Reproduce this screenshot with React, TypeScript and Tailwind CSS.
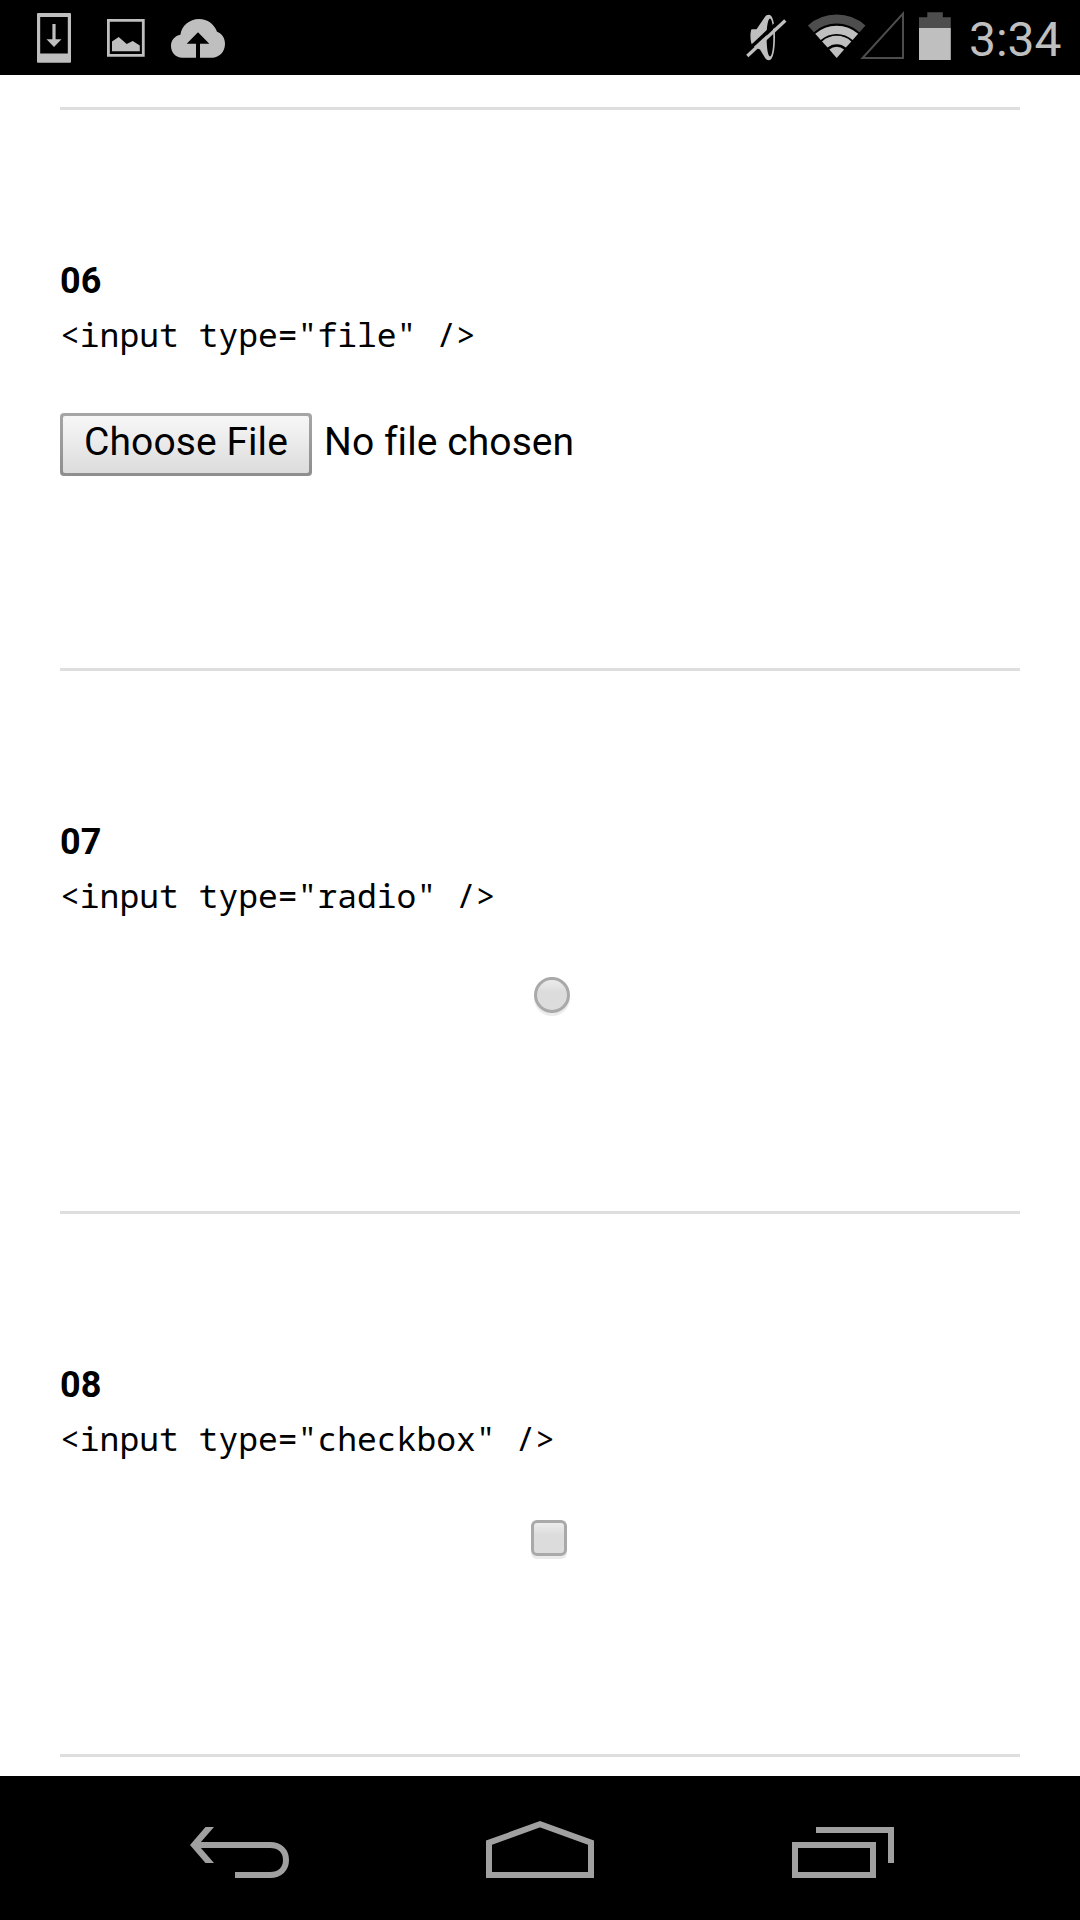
import type { ReactNode } from "react";

function StatusBar() {
  return (
    <header className="flex h-[75px] items-start bg-black pl-[36px] text-[#bfbfbf]">
      <svg width="36" height="75" viewBox="36 0 36 75" fill="currentColor">
        <path fillRule="evenodd" d="M38 13H70Q71 13 71 14V61.7Q71 62.7 70 62.7H38Q37 62.7 37 61.7V14Q37 13 38 13ZM40.2 17V53.5H67.8V17Z" />
        <path d="M52.4 24H55.6V39.3H61.5L54 47L46.5 39.3H52.4Z" />
      </svg>
      <svg className="ml-[34px]" width="40" height="75" viewBox="106 0 40 75" fill="currentColor">
        <path fillRule="evenodd" d="M107 19H144.7V56.7H107ZM109.8 21.8V53.9H141.9V21.8Z" />
        <path d="M112 41.5L118.7 37L126.7 44L132.7 41L139.8 45.5V51.3H112Z" />
      </svg>
      <svg className="ml-[24px]" width="56" height="75" viewBox="170 0 56 75" fill="currentColor">
        <path d="M182.5 57.7C175.5 57.7 171 52.5 171 46C171 40 175 35.8 180.4 34.8C181.5 25.8 189.5 19 199 19C207.5 19 214.5 24.3 217 31.8C221.8 33.4 225 38 225 43.8C225 51.8 219.5 57.7 212 57.7H200V43.7H209.3L198 32.3L186.7 43.7H196V57.7Z" />
      </svg>
      <svg className="ml-[519px]" width="42" height="75" viewBox="745 0 42 75" fill="currentColor">
        <path fillRule="evenodd" d="M751.5 29.2H756.5L764.5 17.5C765.8 15.5 767 14.8 769 14.8C773 14.8 775 25 775 37.5C775 50 773 60.2 769 60.2C767 60.2 765.8 59.2 764.5 57L760 49.5L753 46.5C750 43 749.8 33 751.5 29.2ZM770 18.5C768 18.5 766.6 27 766.6 37.5C766.6 48 768 56.5 770 56.5C772 56.5 773.3 48 773.3 37.5C773.3 27 772 18.5 770 18.5Z" />
        <path d="M745 52.8L783.5 17" stroke="#000" strokeWidth="3.5" />
        <path d="M747.3 56L785.3 20.5" stroke="currentColor" strokeWidth="3.3" />
      </svg>
      <svg className="ml-[20px]" width="98" height="75" viewBox="807 0 98 75" fill="none">
        <g strokeWidth="8.3" stroke="#bfbfbf">
          <path d="M810.9 28.8A39 39 0 0 1 862.5 28.8" stroke="#4d4d4d" strokeWidth="9" />
          <path d="M818 36.9A28.2 28.2 0 0 1 855.4 36.9" />
          <path d="M824.8 44.5A18 18 0 0 1 848.6 44.5" />
          <path d="M836.7 58L829.3 49.6A11.2 11.2 0 0 1 844.1 49.6Z" fill="#bfbfbf" stroke="none" />
        </g>
        <path d="M862.5 58H903V13.5Z" stroke="#4d4d4d" strokeWidth="2" />
      </svg>
      <svg className="ml-[13px]" width="34" height="75" viewBox="918 0 34 75">
        <path d="M919 28V17.2H927.3V12.2H942.8V17.2H950.8V28Z" fill="#4d4d4d" />
        <path d="M919 28H950.8V60H919Z" fill="#bfbfbf" />
      </svg>
      <span className="ml-[17px] pt-[12px] text-[48px] leading-[56px]">3:34</span>
    </header>
  );
}

function Section({ id, type, height, children }: { id: string; type: string; height: string; children: ReactNode }) {
  return (
    <section className={`${height} border-b-3 border-[#dedede] pt-[150px]`}>
      <h2 className="h-[55px] text-[36px] leading-[42px] font-bold">{id}</h2>
      <code className="block h-[98px] font-['Droid_Sans_Mono','Noto_Sans_Mono','Liberation_Mono',monospace] text-[33px] leading-[40px] whitespace-pre">
        {`<input type="${type}" />`}
      </code>
      {children}
    </section>
  );
}

function NavBar() {
  return (
    <nav className="flex h-[144px] bg-black pl-[190px] text-[#a0a0a0]">
      <svg width="100" height="144" viewBox="190 1776 100 144" fill="none" stroke="currentColor" strokeWidth="6">
        <path d="M235 1875H270C280 1875 286 1869 286 1860C286 1851 280 1845 270 1845H198" />
        <path d="M190 1845L205.5 1827H214L200.5 1842.5V1847.5L214 1863H205.5Z" fill="currentColor" stroke="none" />
      </svg>
      <svg className="ml-[195px]" width="110" height="144" viewBox="485 1776 110 144" fill="none" stroke="currentColor" strokeWidth="6">
        <path d="M489 1875V1842.6L540 1824.3L591 1842.6V1875Z" />
      </svg>
      <svg className="ml-[195px]" width="106" height="144" viewBox="790 1776 106 144" fill="none" stroke="currentColor" strokeWidth="6">
        <path d="M795 1845H873V1875H795ZM816 1830H891V1863" />
      </svg>
    </nav>
  );
}

export default function App() {
  return (
    <div className="flex h-[1920px] w-[1080px] flex-col overflow-hidden bg-white font-[Roboto,sans-serif] text-black">
      <StatusBar />
      <main className="h-[1701px] px-[60px] pt-[32px]">
        <div className="h-[3px] bg-[#dedede]" />
        <Section id="06" type="file" height="h-[561px]">
          <div className="flex items-start text-[39px] leading-[53px] tracking-[0.08px] [font-variant-ligatures:none]">
            <button className="h-[63px] w-[252px] rounded-[4px] bg-linear-to-b from-[#a6a6a6] to-[#8e8e8e] p-[3px]">
              <span className="block h-full rounded-[2px] bg-linear-to-b from-[#f7f7f7] to-[#dcdcdc]">Choose File</span>
            </button>
            <span className="ml-[12px] pt-[3px]">No file chosen</span>
          </div>
        </Section>
        <Section id="07" type="radio" height="h-[543px]">
          <div className="mt-[3px] ml-[474px] size-[36px] rounded-full border-3 border-[#a9a9a9] bg-linear-to-b from-[#ececec] to-[#dcdcdc] to-40% shadow-[0_3px_1px_#ebebeb]" />
        </Section>
        <Section id="08" type="checkbox" height="h-[543px]">
          <div className="mt-[3px] ml-[471px] size-[36px] rounded-[6px] border-3 border-[#a9a9a9] bg-linear-to-b from-[#ececec] to-[#dcdcdc] to-40% shadow-[0_3px_0_#ebebeb]" />
        </Section>
      </main>
      <NavBar />
    </div>
  );
}
